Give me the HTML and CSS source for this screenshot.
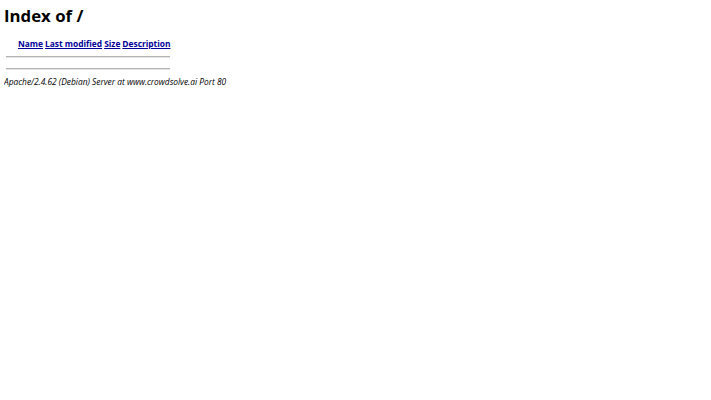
FILE: index.html
```html
<!DOCTYPE html>
<html>
<head>
<title>Index of /</title>
<link rel="stylesheet" href="styles.css">
</head>
<body class="page">
<h1 class="title">Index of /</h1>
<table class="listing">
<tr class="head"><th class="ico"><span class="blank"></span></th><th><a href="#">Name</a></th><th><a href="#">Last modified</a></th><th><a href="#">Size</a></th><th><a href="#">Description</a></th></tr>
<tr><th colspan="5"><hr class="rule"></th></tr>
<tr><th colspan="5"><hr class="rule"></th></tr>
</table>
<address class="sig">Apache/2.4.62 (Debian) Server at www.crowdsolve.ai Port 80</address>
</body>
</html>
```
FILE: styles.css
```css
.page {
  margin: 4px;
  font-family: "Open Sans", sans-serif;
  font-size: 8.4px;
  color: #000;
  background: #fff;
}
.title {
  font-size: 16.8px;
  font-weight: bold;
  margin: 0 0 8px;
}
.listing {
  border-spacing: 2px;
}
.listing th {
  font-weight: bold;
  padding: 0;
}
.head th {
  padding-bottom: 1px;
}
.listing a {
  color: #000099;
}
.blank {
  display: inline-block;
  width: 10px;
  height: 10px;
}
.rule {
  border: 0;
  border-top: 1px solid #b4b4b4;
  border-bottom: 1px solid #e4e4e4;
  margin: 4px 0 4px;
}
.sig {
  font-style: italic;
  margin-top: 0;
}
```
